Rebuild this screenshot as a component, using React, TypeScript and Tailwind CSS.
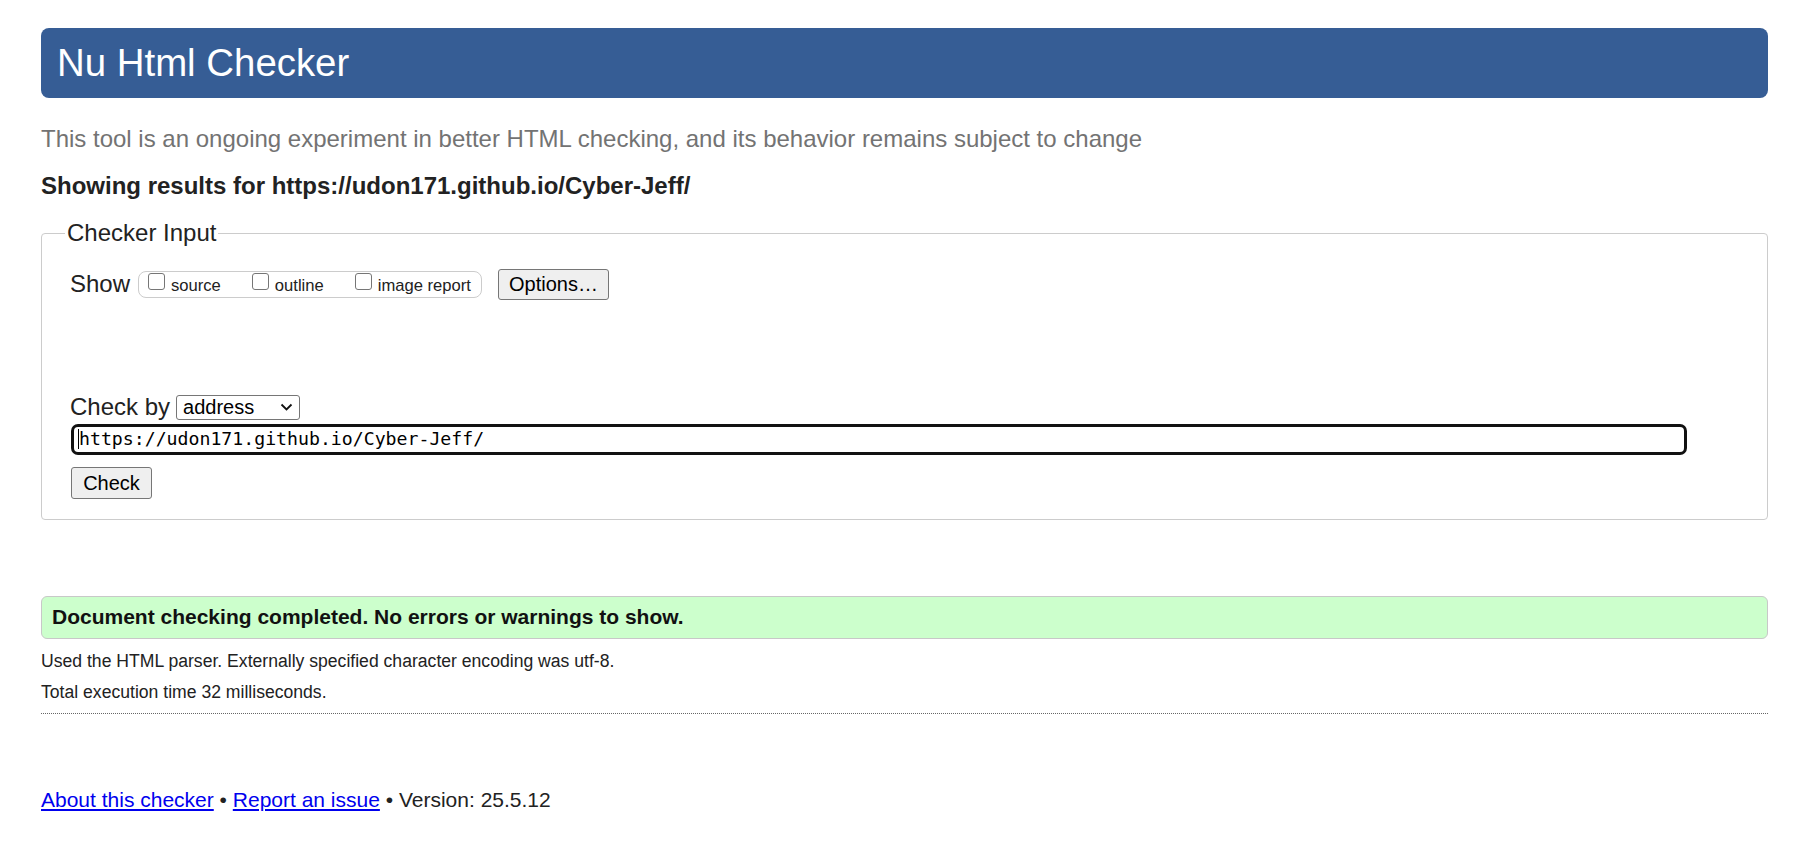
import React from 'react';

function Checkbox({ label, last = false }: { label: string; last?: boolean }) {
  return (
    <label className={`flex items-center ${last ? '' : 'mr-[31px]'}`}>
      <input
        type="checkbox"
        className="appearance-none w-[17px] h-[17px] mb-[6px] border border-[#767676] rounded-[3px] bg-white"
      />
      <span className="ml-[6px] mt-[3px] text-[16.6px] leading-[19px]">{label}</span>
    </label>
  );
}

export default function App() {
  return (
    <div className="min-h-screen bg-white text-[#222] font-['Liberation_Sans',Arial,sans-serif]">
      <div className="pt-[28px] pl-[41px] pr-[38px] pb-[40px]">
        <h1 className="h-[70px] rounded-[8px] bg-[#365d95] flex items-center pl-[16px] text-white text-[38.4px] leading-none font-normal">
          Nu Html Checker
        </h1>

        <p className="mt-[27px] text-[24px] leading-[28px] text-[#737373]">
          This tool is an ongoing experiment in better HTML checking, and its behavior remains subject to change
        </p>

        <p className="mt-[18.5px] text-[24px] leading-[28px] font-bold">
          Showing results for https://udon171.github.io/Cyber-Jeff/
        </p>

        <fieldset className="mt-[19.5px] border border-[#ccc] rounded-[4px] pl-[28px] pb-[20px]">
          <legend className="-ml-[5px] px-[2px] text-[24px] leading-[28px]">Checker Input</legend>

          <div className="mt-[21px] h-[32px] flex items-center">
            <span className="text-[24px] leading-[28px]">Show</span>
            <div className="ml-[8px] h-[27px] flex items-center border border-[#ccc] rounded-[8px] pl-[9px] pr-[10px]">
              <Checkbox label="source" />
              <Checkbox label="outline" />
              <Checkbox label="image report" last />
            </div>
            <button className="ml-[16px] w-[111px] h-[31px] bg-[#efefef] border border-[#767676] rounded-[3px] text-[20px] leading-none text-black">
              Options…
            </button>
          </div>

          <div className="mt-[94px] h-[26px] flex items-center">
            <span className="text-[24px] leading-[28px]">Check by</span>
            <div className="ml-[6px] w-[124px] h-[25px] flex items-center justify-between border border-[#767676] rounded-[3px] bg-white pl-[6px] pr-[6px]">
              <span className="text-[20px] leading-none text-black">address</span>
              <svg width="13" height="8" viewBox="0 0 13 8" fill="none">
                <path d="M1.5 1.5L6.5 6.5L11.5 1.5" stroke="#111" strokeWidth="1.8" />
              </svg>
            </div>
          </div>

          <div className="mt-[3.5px] ml-[1px] w-[1616px] h-[31px] flex items-center border-[3px] border-[#111] rounded-[7px] pl-[4px]">
            <span className="w-[1px] h-[20px] bg-black" />
            <span className="text-[18.2px] leading-none text-black font-['DejaVu_Sans_Mono',monospace]">
              https://udon171.github.io/Cyber-Jeff/
            </span>
          </div>

          <button className="mt-[12px] ml-[1px] w-[81px] h-[32px] bg-[#efefef] border border-[#767676] rounded-[3px] text-[20px] leading-none text-black">
            Check
          </button>
        </fieldset>

        <div className="mt-[76px] h-[43px] flex items-center bg-[#ccffcc] border border-[#c8c8c8] rounded-[6px] pl-[10px]">
          <span className="text-[21px] leading-[24px] font-bold text-[#111]">
            Document checking completed. No errors or warnings to show.
          </span>
        </div>

        <p className="mt-[11px] text-[17.6px] leading-[22px]">
          Used the HTML parser. Externally specified character encoding was utf-8.
        </p>
        <p className="mt-[9px] text-[17.6px] leading-[22px]">Total execution time 32 milliseconds.</p>

        <div className="mt-[10.5px] border-t border-dotted border-[#666]" />

        <p className="mt-[73.5px] text-[21px] leading-[24px]">
          <a href="#" className="text-[#0000ee] underline">About this checker</a>
          {' • '}
          <a href="#" className="text-[#0000ee] underline">Report an issue</a>
          {' • Version: 25.5.12'}
        </p>
      </div>
    </div>
  );
}
